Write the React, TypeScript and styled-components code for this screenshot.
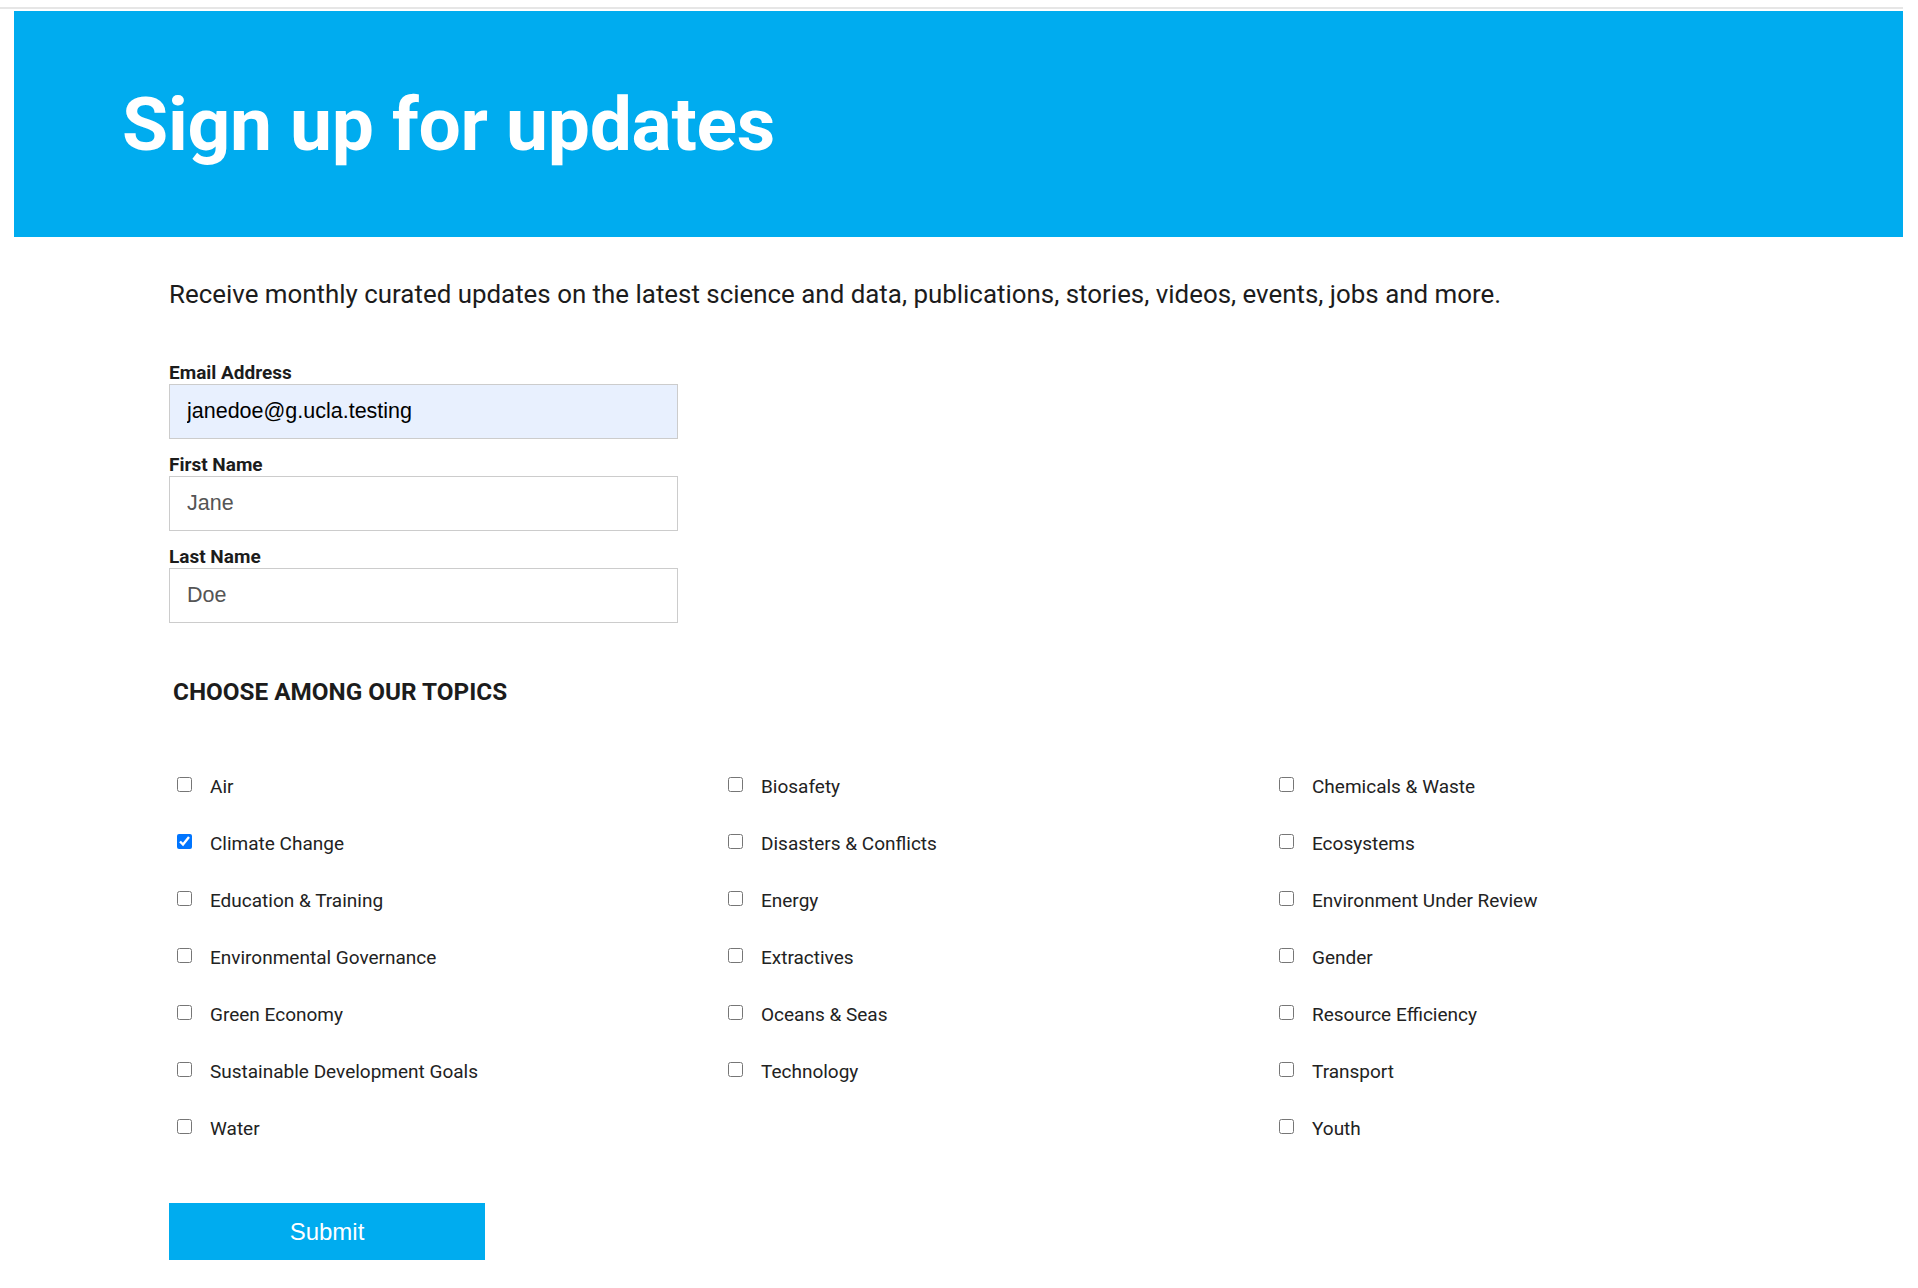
import React from "react";
import styled, { createGlobalStyle } from "styled-components";

const GlobalStyle = createGlobalStyle`
  html, body { margin: 0; padding: 0; background: #ffffff; }
  body { font-family: Roboto, "Liberation Sans", Arial, sans-serif; color: #1c1c1c; }
  * { box-sizing: border-box; }
`;

const Page = styled.div`
  width: 1903px;
  padding-top: 7px;
  padding-bottom: 20px;
`;

const TopRule = styled.div`
  height: 2px;
  background: #e6e6e6;
`;

const Banner = styled.header`
  margin: 2px 0 0 14px;
  height: 226px;
  background: #00acef;
  display: flex;
  align-items: center;
  padding-left: 108px;
`;

const Title = styled.h1`
  margin: 0;
  font-family: Roboto, sans-serif;
  font-weight: 700;
  font-size: 75px;
  line-height: 90px;
  color: #ffffff;
  letter-spacing: -0.3px;
`;

const Content = styled.main`
  padding-left: 169px;
  padding-top: 42px;
`;

const Intro = styled.p`
  margin: 0 0 53px 0;
  font-size: 25.9px;
  line-height: 30px;
  color: #1c1c1c;
`;

const Field = styled.div`
  display: flex;
  flex-direction: column;
  width: 509px;
  margin-bottom: 15px;
`;

const Label = styled.label`
  font-size: 19px;
  font-weight: 700;
  line-height: 22px;
  color: #1c1c1c;
`;

const Input = styled.input<{ $autofill?: boolean }>`
  height: 55px;
  width: 100%;
  border: 1px solid #cccccc;
  background: ${(p) => (p.$autofill ? "#e8f0fe" : "#ffffff")};
  color: ${(p) => (p.$autofill ? "#000000" : "#555555")};
  font-family: "Liberation Sans", Arial, sans-serif;
  font-size: 21.5px;
  padding: 0 17px;
  margin: 0;
  outline: none;
  border-radius: 0;
`;

const Heading = styled.h2`
  margin: 55px 0 0 0;
  padding-left: 4px;
  font-size: 24.3px;
  font-weight: 700;
  line-height: 28px;
  color: #1c1c1c;
`;

const TopicGrid = styled.div`
  display: grid;
  grid-template-columns: repeat(3, 551px);
  grid-auto-rows: 57px;
  margin-top: 70px;
  padding-left: 8px;
`;

const TopicItem = styled.label`
  display: flex;
  align-items: flex-start;
  gap: 18px;
  font-size: 19px;
  line-height: 22px;
  color: #222222;
  cursor: pointer;
`;

const Box = styled.input`
  width: 15px;
  height: 15px;
  margin: 1px 0 0 0;
  flex: none;
`;

const EmptyCell = styled.div``;

const SubmitButton = styled.button`
  margin-top: 28px;
  width: 316px;
  height: 57px;
  border: none;
  border-radius: 0;
  background: #00acef;
  color: #ffffff;
  font-family: "Liberation Sans", Arial, sans-serif;
  font-size: 24px;
  cursor: pointer;
`;

const topics: (string | null)[] = [
  "Air", "Biosafety", "Chemicals & Waste",
  "Climate Change", "Disasters & Conflicts", "Ecosystems",
  "Education & Training", "Energy", "Environment Under Review",
  "Environmental Governance", "Extractives", "Gender",
  "Green Economy", "Oceans & Seas", "Resource Efficiency",
  "Sustainable Development Goals", "Technology", "Transport",
  "Water", null, "Youth",
];

export default function App() {
  return (
    <>
      <GlobalStyle />
      <Page>
        <TopRule />
        <Banner>
          <Title>Sign up for updates</Title>
        </Banner>
        <Content>
          <Intro>
            Receive monthly curated updates on the latest science and data, publications, stories, videos, events, jobs and more.
          </Intro>
          <Field>
            <Label htmlFor="email">Email Address</Label>
            <Input id="email" $autofill defaultValue="janedoe@g.ucla.testing" />
          </Field>
          <Field>
            <Label htmlFor="first">First Name</Label>
            <Input id="first" defaultValue="Jane" />
          </Field>
          <Field>
            <Label htmlFor="last">Last Name</Label>
            <Input id="last" defaultValue="Doe" />
          </Field>
          <Heading>CHOOSE AMONG OUR TOPICS</Heading>
          <TopicGrid>
            {topics.map((t, i) =>
              t ? (
                <TopicItem key={t}>
                  <Box type="checkbox" defaultChecked={t === "Climate Change"} />
                  <span>{t}</span>
                </TopicItem>
              ) : (
                <EmptyCell key={`empty-${i}`} />
              )
            )}
          </TopicGrid>
          <SubmitButton type="button">Submit</SubmitButton>
        </Content>
      </Page>
    </>
  );
}
